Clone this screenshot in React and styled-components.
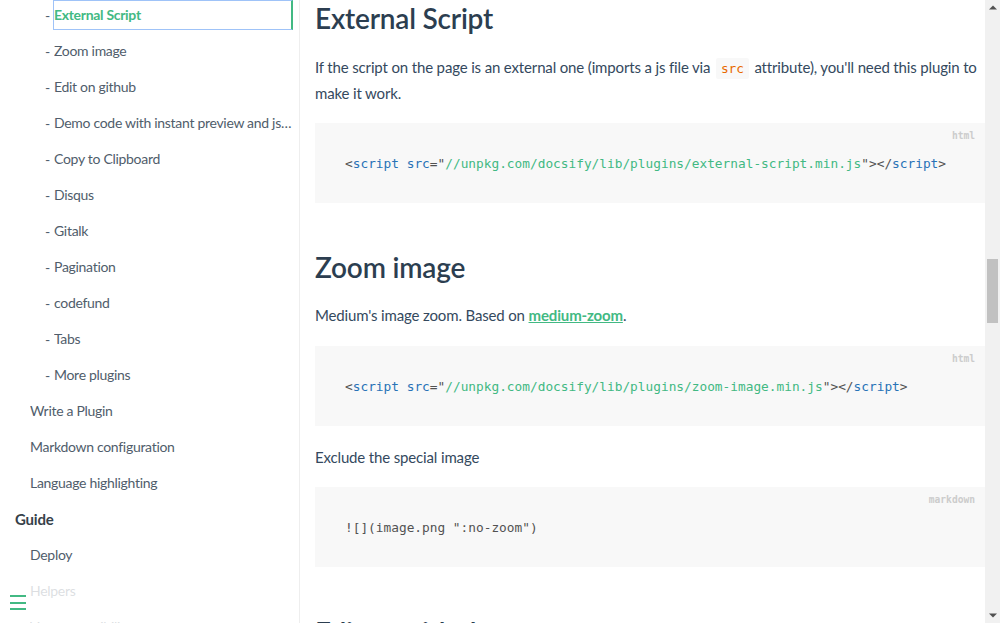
import React from "react";
import styled, { createGlobalStyle } from "styled-components";

const Global = createGlobalStyle`
  html, body { margin: 0; padding: 0; overflow: hidden; background: #fff; }
  body { font-family: Lato, "Noto Sans", sans-serif; -webkit-font-smoothing: antialiased; }
`;

const Page = styled.div`
  display: flex;
  width: 1000px;
  height: 623px;
  overflow: hidden;
`;

const Sidebar = styled.aside`
  position: relative;
  width: 299px;
  flex: none;
  border-right: 1px solid #eee;
  overflow: hidden;
`;

const NavList = styled.ul`
  list-style: none;
  margin: 0;
  padding: 0 6px 0 0;
  display: flex;
  flex-direction: column;
  gap: 6px;
`;

const NavItem = styled.li`
  display: flex;
  align-items: center;
  height: 30px;
  padding-left: ${(p) => p.$indent}px;
  font-size: 14px;
  letter-spacing: -0.3px;
  color: #505d6b;
  min-width: 0;
`;

const Dash = styled.span`
  flex: none;
  width: 9px;
  margin-left: -9px;
  color: #505d6b;
`;

const NavLink = styled.a`
  display: block;
  flex: 1;
  min-width: 0;
  height: 30px;
  line-height: 30px;
  box-sizing: border-box;
  white-space: nowrap;
  overflow: hidden;
  text-overflow: ellipsis;
  color: ${(p) => (p.$active ? "#42b983" : "#505d6b")};
  font-weight: ${(p) => (p.$active ? 700 : 400)};
  text-decoration: none;
  ${(p) =>
    p.$active &&
    `
    border: 1px solid #9fc3f8;
    border-right: 2px solid #42b983;
    margin-left: -1px;
    line-height: 28px;
  `}
`;

const SectionTitle = styled.li`
  height: 30px;
  line-height: 30px;
  padding-left: 15px;
  font-size: 15px;
  letter-spacing: -0.2px;
  font-weight: 700;
  color: #364149;
`;

const Toggle = styled.button`
  position: absolute;
  left: 0;
  bottom: 0;
  width: 284px;
  height: 43px;
  padding: 15px 0 0 10px;
  border: 0;
  background: rgba(255, 255, 255, 0.8);
  display: flex;
  flex-direction: column;
  gap: 4.5px;
  align-items: flex-start;
  cursor: pointer;
`;

const ToggleBar = styled.span`
  display: block;
  width: 16px;
  height: 2px;
  background: #42b983;
`;

const Main = styled.main`
  flex: 1;
  min-width: 0;
  padding-left: 15px;
  overflow: hidden;
`;

const H2 = styled.h2`
  margin: ${(p) => p.$top}px 0 0;
  height: 36px;
  line-height: 36px;
  font-size: 28px;
  font-weight: 600;
  color: #2c3e50;
  letter-spacing: -0.2px;
`;

const P = styled.p`
  margin: ${(p) => p.$top}px 0 0;
  font-size: 15px;
  line-height: 26px;
  color: #34495e;
  letter-spacing: -0.15px;
`;

const InlineCode = styled.code`
  font-family: "DejaVu Sans Mono", "Liberation Mono", monospace;
  font-size: 12.8px;
  line-height: 1;
  color: #e96900;
  background: #f8f8f8;
  border-radius: 2px;
  padding: 3px 5px;
  margin: 0 2px;
`;

const Link = styled.a`
  color: #42b983;
  font-weight: 700;
  text-decoration: underline;
`;

const Pre = styled.pre`
  position: relative;
  margin: ${(p) => p.$top}px 0 0;
  height: 80px;
  box-sizing: border-box;
  background: #f8f8f8;
  padding: 0 0 0 30px;
  display: flex;
  align-items: center;
  font-family: "DejaVu Sans Mono", "Liberation Mono", monospace;
  font-size: 12.8px;
  color: #525252;
  overflow: hidden;
`;

const Lang = styled.span`
  position: absolute;
  top: 5px;
  right: 10px;
  height: 15px;
  line-height: 15px;
  font-family: "DejaVu Sans Mono", monospace;
  font-size: 9.6px;
  font-weight: 700;
  color: #ccc;
`;

const Tok = styled.span`
  color: ${(p) =>
    p.$t === "tag" ? "#2973b7" : p.$t === "str" ? "#42b983" : "#525252"};
`;

const Scrollbar = styled.div`
  width: 15px;
  flex: none;
  background: #f1f1f1;
  display: flex;
  flex-direction: column;
`;

const Arrow = styled.div`
  height: 15px;
  display: flex;
  align-items: center;
  justify-content: center;
`;

const Track = styled.div`
  flex: 1;
  display: flex;
  justify-content: center;
`;

const Thumb = styled.div`
  margin-top: 244px;
  width: 11px;
  height: 64px;
  background: #c1c1c1;
`;

const subItems = [
  "External Script",
  "Zoom image",
  "Edit on github",
  "Demo code with instant preview and jsfiddle integration",
  "Copy to Clipboard",
  "Disqus",
  "Gitalk",
  "Pagination",
  "codefund",
  "Tabs",
  "More plugins",
];

function ScriptLine({ url }) {
  return (
    <code>
      <Tok>&lt;</Tok>
      <Tok $t="tag">script</Tok> <Tok $t="tag">src</Tok>
      <Tok>="</Tok>
      <Tok $t="str">{url}</Tok>
      <Tok>"&gt;&lt;/</Tok>
      <Tok $t="tag">script</Tok>
      <Tok>&gt;</Tok>
    </code>
  );
}

export default function App() {
  return (
    <>
      <Global />
      <Page>
        <Sidebar>
          <NavList>
            {subItems.map((t, i) => (
              <NavItem key={t} $indent={54}>
                <Dash>-</Dash>
                <NavLink $active={i === 0}>{t}</NavLink>
              </NavItem>
            ))}
            <NavItem $indent={30}>
              <NavLink>Write a Plugin</NavLink>
            </NavItem>
            <NavItem $indent={30}>
              <NavLink>Markdown configuration</NavLink>
            </NavItem>
            <NavItem $indent={30}>
              <NavLink>Language highlighting</NavLink>
            </NavItem>
            <SectionTitle>Guide</SectionTitle>
            <NavItem $indent={30}>
              <NavLink>Deploy</NavLink>
            </NavItem>
            <NavItem $indent={30}>
              <NavLink>Helpers</NavLink>
            </NavItem>
            <NavItem $indent={30}>
              <NavLink>Vue compatibility</NavLink>
            </NavItem>
          </NavList>
          <Toggle aria-label="toggle sidebar">
            <ToggleBar />
            <ToggleBar />
            <ToggleBar />
          </Toggle>
        </Sidebar>
        <Main>
          <H2 $top={0}>External Script</H2>
          <P $top={18}>
            If the script on the page is an external one (imports a js file via{" "}
            <InlineCode>src</InlineCode> attribute), you'll need this plugin to
            make it work.
          </P>
          <Pre $top={17}>
            <Lang>html</Lang>
            <ScriptLine url="//unpkg.com/docsify/lib/plugins/external-script.min.js" />
          </Pre>
          <H2 $top={46}>Zoom image</H2>
          <P $top={17}>
            Medium's image zoom. Based on <Link>medium-zoom</Link>.
          </P>
          <Pre $top={18}>
            <Lang>html</Lang>
            <ScriptLine url="//unpkg.com/docsify/lib/plugins/zoom-image.min.js" />
          </Pre>
          <P $top={18}>Exclude the special image</P>
          <Pre $top={17}>
            <Lang>markdown</Lang>
            <code>![](image.png ":no-zoom")</code>
          </Pre>
          <H2 $top={47}>Edit on github</H2>
        </Main>
        <Scrollbar>
          <Arrow>
            <svg width="8" height="5" viewBox="0 0 8 5">
              <path d="M0 4.5 L4 0.5 L8 4.5 Z" fill="#505050" />
            </svg>
          </Arrow>
          <Track>
            <Thumb />
          </Track>
          <Arrow>
            <svg width="8" height="5" viewBox="0 0 8 5">
              <path d="M0 0.5 L4 4.5 L8 0.5 Z" fill="#505050" />
            </svg>
          </Arrow>
        </Scrollbar>
      </Page>
    </>
  );
}
